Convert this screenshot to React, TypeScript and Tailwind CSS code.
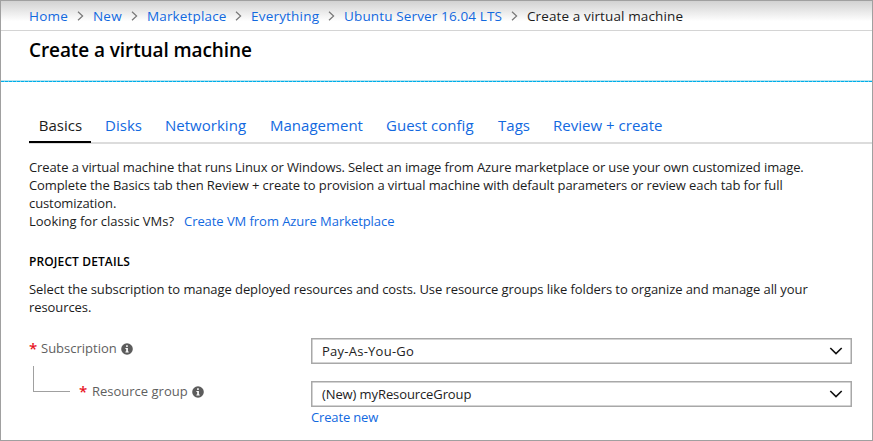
import React from "react";

const crumbs = [
  { label: "Home", width: "w-[39px]", gap: "w-[25px]", spacing: "tracking-[0.2px]" },
  { label: "New", width: "w-[29px]", gap: "w-[25px]", spacing: "tracking-[0.2px]" },
  { label: "Marketplace", width: "w-[80px]", gap: "w-[24px]", spacing: "tracking-[0.15px]" },
  { label: "Everything", width: "w-[69px]", gap: "w-[24px]", spacing: "tracking-[0.2px]" },
  { label: "Ubuntu Server 16.04 LTS", width: "w-[158px]", gap: "w-[25px]", spacing: "tracking-[0.14px]" },
];

const tabs = [
  { label: "Disks", width: "w-[60px]" },
  { label: "Networking", width: "w-[105px]" },
  { label: "Management", width: "w-[116px]" },
  { label: "Guest config", width: "w-[112px]" },
  { label: "Tags", width: "w-[55px]" },
  { label: "Review + create", width: "w-[112px]" },
];

function InfoIcon() {
  return (
    <svg width="12" height="12" viewBox="0 0 12 12" className="mt-0.5 shrink-0">
      <circle cx="6" cy="6" r="5.8" fill="#5c5c5c" />
      <path d="M4.4 5h2.5v3.6h.8v.9H4.4v-.9h.8V5.9h-.8z" fill="#fff" />
      <rect x="5.1" y="2.3" width="1.7" height="1.6" fill="#fff" />
    </svg>
  );
}

function Required() {
  return <span className="w-[12px] pb-[1px] text-[15px] font-semibold text-[#e81123]">*</span>;
}

function Select({ value, spacing }: { value: string; spacing: string }) {
  return (
    <div className="flex h-[26px] w-[541px] items-center justify-between bg-white pr-[9px] pl-[11px] ring-[1.5px] ring-[#a8a8a8] ring-inset">
      <span className={`text-[13px] text-[#222] ${spacing}`}>{value}</span>
      <svg width="14" height="8" viewBox="0 0 14 8" fill="none">
        <path d="M1.3 1 7 6.6 12.7 1" stroke="#111" strokeWidth="1.6" />
      </svg>
    </div>
  );
}

export default function App() {
  return (
    <div className="flex h-[441px] w-[873px] flex-col overflow-hidden border border-[#a0a0a0] bg-white font-['Open_Sans','Noto_Sans',sans-serif] whitespace-nowrap text-[#1c1c1c]">
      <nav className="flex h-[30px] shrink-0 items-center border-b border-[#d4d4d4] bg-linear-to-b from-[#d2d2d2] to-white to-70% pt-px pl-[28px] text-[13.5px]">
        {crumbs.map((c) => (
          <React.Fragment key={c.label}>
            <a className={`${c.width} ${c.spacing} text-[#1269df]`}>{c.label}</a>
            <span className={`${c.gap} flex items-center justify-center pr-px`}>
              <svg width="7" height="10" viewBox="0 0 7 10" fill="none">
                <path d="M1 .8 5.6 5 1 9.2" stroke="#777" strokeWidth="1.2" />
              </svg>
            </span>
          </React.Fragment>
        ))}
        <span className="tracking-[0.12px]">Create a virtual machine</span>
      </nav>
      <header className="flex h-[49px] shrink-0 items-start pt-[5px] pl-[28px]">
        <h1 className="text-[19px] leading-[28px] font-semibold tracking-[-0.09px] text-black">Create a virtual machine</h1>
      </header>
      <div className="h-px shrink-0 bg-[#b9e4ef]" />
      <div className="h-px shrink-0 bg-[#55c8ea] bg-[linear-gradient(90deg,#00aeea_75%,#6fd0ec_75%)] bg-size-[4px_1px]" />
      <div className="ml-[28px] flex h-[62px] shrink-0 items-end border-b-2 border-[#dcdcdc] text-[15px]">
        <span className="mr-[14px] -mb-px flex h-[34px] w-[62px] justify-center border-b-2 border-black pl-px leading-[33px]">Basics</span>
        {tabs.map((t) => (
          <a key={t.label} className={`${t.width} h-[33px] leading-[33px] tracking-[0.02px] text-[#1269df]`}>{t.label}</a>
        ))}
      </div>
      <main className="flex flex-col pt-[14px] pl-[28px] text-[13px] leading-[18px]">
        <p>
          <span className="block tracking-[-0.1px]">Create a virtual machine that runs Linux or Windows. Select an image from Azure marketplace or use your own customized image.</span>
          <span className="block tracking-[-0.094px]">Complete the Basics tab then Review + create to provision a virtual machine with default parameters or review each tab for full</span>
          <span className="block tracking-[-0.1px]">customization.</span>
        </p>
        <p className="flex">
          <span className="w-[155px]">Looking for classic VMs?</span>
          <a className="tracking-[-0.06px] text-[#1269df]">Create VM from Azure Marketplace</a>
        </p>
        <h2 className="mt-[23px] text-[12px] font-semibold tracking-[0.12px] text-black">PROJECT DETAILS</h2>
        <p className="mt-[9px]">
          <span className="block tracking-[-0.08px]">Select the subscription to manage deployed resources and costs. Use resource groups like folders to organize and manage all your</span>
          <span className="block tracking-[-0.08px]">resources.</span>
        </p>
        <div className="mt-[22px] flex h-[43px]">
          <div className="flex h-[20px] w-[282px] items-center text-[#5f5f5f]">
            <Required />
            <span className="w-[80px]">Subscription</span>
            <InfoIcon />
          </div>
          <Select value="Pay-As-You-Go" spacing="tracking-[0.25px]" />
        </div>
        <div className="flex">
          <div className="flex w-[282px] text-[#5f5f5f]">
            <span className="-mt-[15px] ml-[4px] h-[26px] w-[37px] border-b border-l border-[#a0a0a0]" />
            <div className="flex h-[20px] items-center pl-[9px]">
              <Required />
              <span className="ml-px w-[100px]">Resource group</span>
              <InfoIcon />
            </div>
          </div>
          <Select value="(New) myResourceGroup" spacing="tracking-[-0.1px]" />
        </div>
        <a className="mt-px ml-[282px] tracking-[-0.15px] text-[#1269df]">Create new</a>
      </main>
    </div>
  );
}
